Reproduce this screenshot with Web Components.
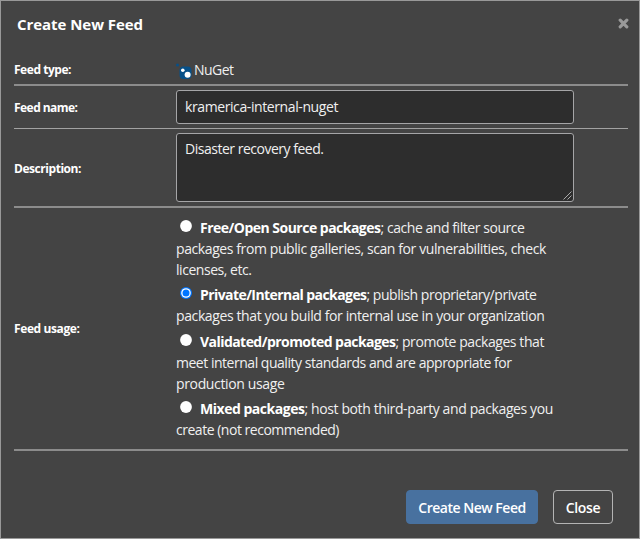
<!DOCTYPE html>
<html lang="en"><head><meta charset="utf-8"><title>Create New Feed</title>
<style>
html,body{margin:0;height:100%;overflow:hidden}
body{background:#444;color:#f0f0f0;font:14px/21px "Open Sans","Noto Sans",sans-serif}
</style></head><body>
<feed-dialog></feed-dialog>
<script>
const define=(name,html,init)=>customElements.define(name,class extends HTMLElement{
  connectedCallback(){
    if(this.shadowRoot)return;
    this.attachShadow({mode:'open'}).innerHTML=html;
    if(init)init(this,this.shadowRoot);
  }
});

// A single line of text whose tracking is adjusted to fill the width given in "w".
define('fit-text',`<style>:host{display:inline-block;white-space:pre;vertical-align:top}span{display:inline-block}</style><span><slot></slot></span>`,(el,root)=>{
  const w=+el.getAttribute('w'),s=root.querySelector('span');
  el.style.width=w+'px';
  s.style.letterSpacing=(w-s.getBoundingClientRect().width)/el.textContent.length+'px';
});

define('form-row',`<style>
:host{display:grid;grid-template-columns:162px 1fr;align-items:center;box-sizing:border-box;border-bottom:1px solid #a2a2a2}
:host([thick]){border-color:#8c8c8c;box-shadow:0 1px #8c8c8c}
.l{font-size:12px;font-weight:700;color:#fff;line-height:18px;padding-top:1px}
.v{align-self:start}
</style><div class="l"><slot name="label"></slot></div><div class="v"><slot></slot></div>`);

define('text-box',`<style>
:host{display:block;box-sizing:border-box;width:398px;background:#2d2d2d;border:1px solid #a5a5a7;border-radius:3px;padding:5px 8px;position:relative}
svg{display:none;position:absolute;right:1px;bottom:1px}
:host([multiline]) svg{display:block}
</style><slot></slot><svg width="9" height="9" viewBox="0 0 9 9" stroke="#aaa"><path d="M.5 8.5l8-8M4.5 8.5l4-4"/></svg>`);

define('nuget-icon',`<style>:host{display:inline-block;width:18px;height:17px;vertical-align:top}svg{display:block}</style>
<svg width="18" height="17" viewBox="0 0 18 17"><circle cx="1.5" cy="2" r="1.5" fill="#075088"/><rect x="3.5" y="3.5" width="12" height="12.5" rx="4" fill="#075088"/><circle cx="6.8" cy="7.2" r="1.8" fill="#fff"/><circle cx="11.6" cy="11.8" r="3" fill="#fff"/></svg>`);

define('usage-option',`<style>
:host{display:block;margin-bottom:4.6px}
.first{display:flex;height:20.9px}
svg{margin:3px 7.6px 0 4.4px;flex:none}
circle{fill:#fff}
.dot,.ring{display:none}
:host([checked]) .ring,:host([checked]) .dot{display:block;fill:#0075ff}
</style><div class="first"><svg width="12" height="12" viewBox="0 0 12 12" overflow="visible"><circle class="ring" cx="6" cy="6" r="6"/><circle cx="6" cy="6" r="5.9" class="base"/><circle class="dot" cx="6" cy="6" r="3.5"/></svg><slot name="first"></slot></div><slot></slot>`,(el,root)=>{
  if(el.hasAttribute('checked'))root.querySelector('.base').setAttribute('r','4.8');
});

define('push-button',`<style>
:host{display:flex;align-items:center;justify-content:center;box-sizing:border-box;height:34px;border:1px solid #b4b4b4;border-radius:4px;font-weight:600;color:#fff}
:host([primary]){background:#48719f;border-color:#48719f}
</style><slot></slot>`);

define('feed-dialog',`<style>
:host{display:flex;flex-direction:column;box-sizing:border-box;width:640px;height:539px;border:1px solid #999;background:#444}
header{display:flex;justify-content:space-between;height:54px;padding:11px 10.5px 0 16px;box-sizing:border-box;font-size:15px;line-height:24px;font-weight:700;color:#fff;flex:none}
header svg{margin-top:6px}
main{width:614px;margin-left:13px;flex:none}
fit-text.b{font-weight:700;color:#fff}
.line{display:block;height:20.9px}
footer{display:flex;gap:15px;padding:40px 26px 0 405px}
</style>
<header><fit-text w="126">Create New Feed</fit-text><svg width="11" height="11" viewBox="0 0 11 11" stroke="#999" stroke-width="3.2" stroke-linecap="round"><path d="M2.2 2.2l6.6 6.6M8.8 2.2l-6.6 6.6"/></svg></header>
<main>
<form-row thick style="height:30px"><fit-text slot="label" w="57">Feed type:</fit-text><div style="height:29px;display:flex"><nuget-icon style="margin-top:8px"></nuget-icon><fit-text w="39.5" style="margin-top:4px">NuGet</fit-text></div></form-row>
<form-row style="height:44px"><fit-text slot="label" w="63.5" style="margin-top:1px">Feed name:</fit-text><text-box style="height:34px;margin-top:5px"><fit-text w="153">kramerica-internal-nuget</fit-text></text-box></form-row>
<form-row thick style="height:78px"><fit-text slot="label" w="67" style="margin-top:1px">Description:</fit-text><text-box multiline style="height:69px;margin-top:4px;padding-top:4px"><fit-text w="138.5">Disaster recovery feed.</fit-text></text-box></form-row>
<form-row thick style="height:243px"><fit-text slot="label" w="65.5" style="margin-top:1px">Feed usage:</fit-text><div style="padding-top:10.2px">
<usage-option><fit-text slot="first" class="b" w="180.5">Free/Open Source packages</fit-text><fit-text slot="first" w="144">; cache and filter source</fit-text><fit-text class="line" w="370">packages from public galleries, scan for vulnerabilities, check</fit-text><fit-text class="line" w="75.5">licenses, etc.</fit-text></usage-option>
<usage-option checked><fit-text slot="first" class="b" w="166.5">Private/Internal packages</fit-text><fit-text slot="first" w="170">; publish proprietary/private</fit-text><fit-text class="line" w="368.5">packages that you build for internal use in your organization</fit-text></usage-option>
<usage-option><fit-text slot="first" class="b" w="195.5">Validated/promoted packages</fit-text><fit-text slot="first" w="148.5">; promote packages that</fit-text><fit-text class="line" w="335.5">meet internal quality standards and are appropriate for</fit-text><fit-text class="line" w="108.5">production usage</fit-text></usage-option>
<usage-option><fit-text slot="first" class="b" w="104.5">Mixed packages</fit-text><fit-text slot="first" w="248.5">; host both third-party and packages you</fit-text><fit-text class="line" w="163">create (not recommended)</fit-text></usage-option>
</div></form-row>
</main>
<footer><push-button primary style="width:132px"><fit-text w="107.5">Create New Feed</fit-text></push-button><push-button style="width:60px"><fit-text w="34.5">Close</fit-text></push-button></footer>`);
</script></body></html>
